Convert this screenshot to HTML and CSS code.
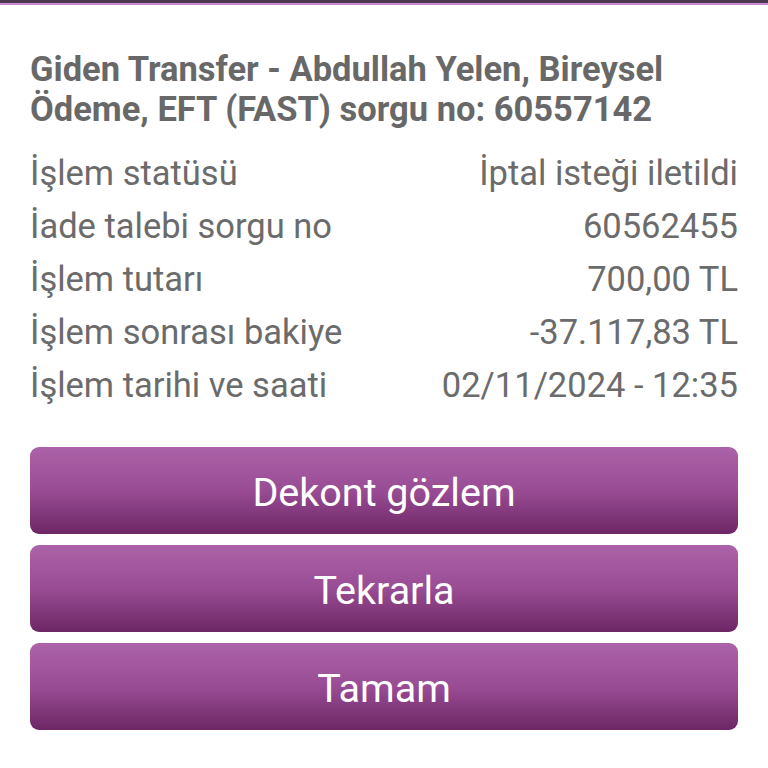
FILE: index.html
```html
<!DOCTYPE html>
<html lang="tr">
<head>
<meta charset="utf-8">
<link rel="stylesheet" href="styles.css">
</head>
<body>
<div class="topbar"></div>
<main class="content">
  <h1 class="title">Giden Transfer - Abdullah Yelen, Bireysel Ödeme, EFT (FAST) sorgu no: 60557142</h1>
  <div class="rows">
    <div class="row"><span>İşlem statüsü</span><span>İptal isteği iletildi</span></div>
    <div class="row"><span>İade talebi sorgu no</span><span>60562455</span></div>
    <div class="row"><span>İşlem tutarı</span><span>700,00 TL</span></div>
    <div class="row"><span>İşlem sonrası bakiye</span><span>-37.117,83 TL</span></div>
    <div class="row"><span>İşlem tarihi ve saati</span><span>02/11/2024 - 12:35</span></div>
  </div>
  <div class="buttons">
    <button class="btn">Dekont gözlem</button>
    <button class="btn">Tekrarla</button>
    <button class="btn">Tamam</button>
  </div>
</main>
</body>
</html>
```
FILE: styles.css
```css
html, body {
  margin: 0;
  padding: 0;
  background: #ffffff;
  font-family: Roboto, "Liberation Sans", sans-serif;
}
.topbar {
  height: 3px;
  background: #4a3a4f;
  border-bottom: 2px solid #c98bd0;
}
.content {
  padding: 44px 30px 0 30px;
}
.title {
  margin: 0;
  font-size: 34.5px;
  line-height: 40px;
  font-weight: 700;
  color: #686868;
}
.rows {
  margin-top: 18px;
}
.row {
  display: flex;
  justify-content: space-between;
  font-size: 34.5px;
  line-height: 53px;
  color: #6b6b6b;
}
.buttons {
  margin-top: 35px;
  display: flex;
  flex-direction: column;
  gap: 11px;
}
.btn {
  height: 87px;
  width: 100%;
  border: none;
  border-radius: 9px;
  background: linear-gradient(to bottom, #ac62a8 0%, #994c94 50%, #6d2765 100%);
  color: #ffffff;
  font-family: Roboto, "Liberation Sans", sans-serif;
  font-size: 39.5px;
  padding: 3px 0 0 0;
}
```
